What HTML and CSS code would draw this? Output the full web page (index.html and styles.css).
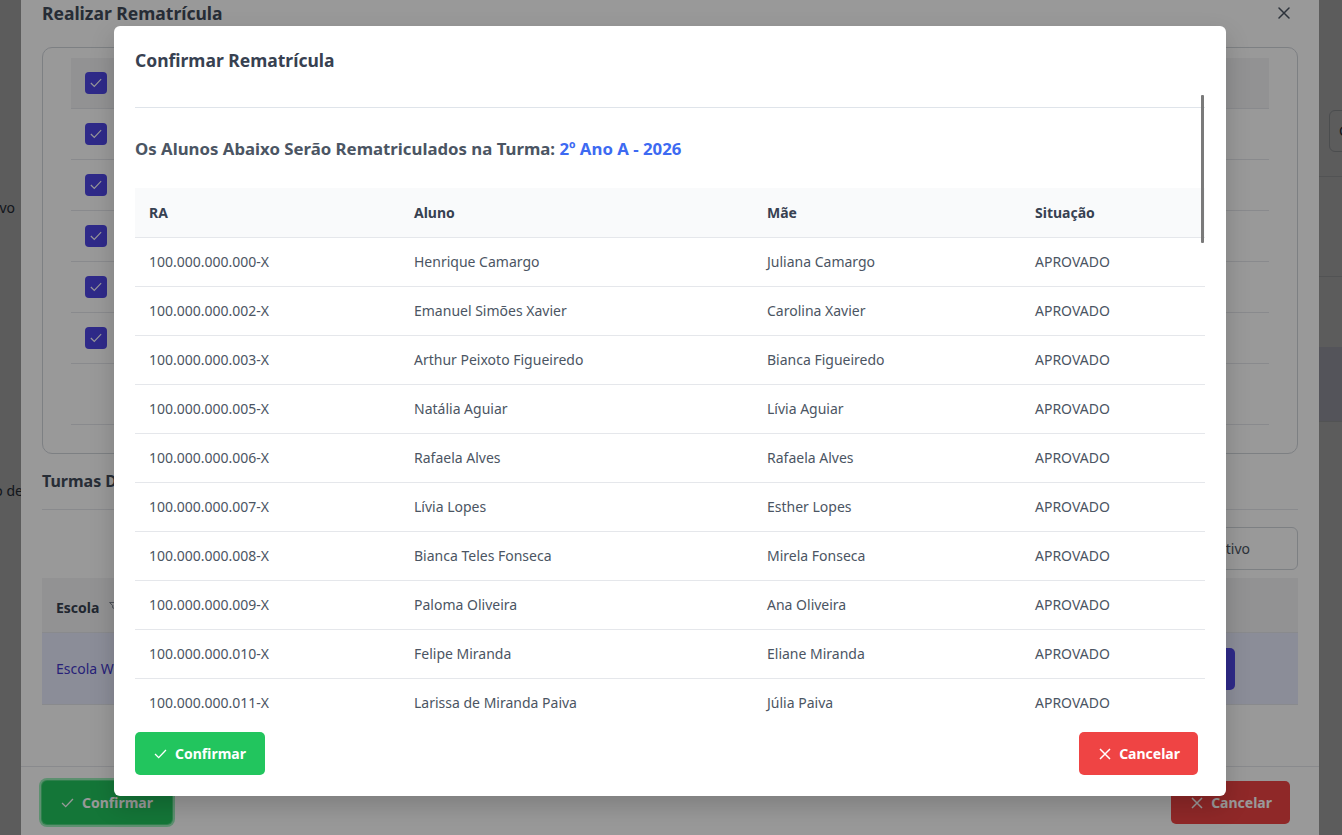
FILE: index.html
```html
<!DOCTYPE html>
<html lang="pt-BR">
<head>
<meta charset="utf-8">
<title>Confirmar Rematrícula</title>
<link rel="stylesheet" href="styles.css">
</head>
<body>
<div class="page">
  <div class="page-left">
    <div class="page-label page-label-1"><span>Ano Letivo</span></div>
    <div class="page-label page-label-2"><span>Período de</span></div>
  </div>
  <div class="page-right">
    <div class="page-btn">Consultar</div>
    <div class="page-row r1"></div>
    <div class="page-row r2"></div>
    <div class="page-row r3"></div>
  </div>
</div>

<div class="backdrop"></div>

<div class="modal modal-main">
  <div class="mm-header">
    <h2 class="mm-title">Realizar Rematrícula</h2>
    <svg class="mm-close" viewBox="0 0 12 12" width="12" height="12"><path d="M1 1L11 11M11 1L1 11" fill="none" stroke="currentColor" stroke-width="1.5" stroke-linecap="round"/></svg>
  </div>
  <div class="mm-card">
    <table class="mm-students">
      <thead>
        <tr><th class="chk-col"><span class="chk"><svg viewBox="0 0 14 11" width="12" height="10"><path d="M1 5.5L5 9.5L13 1" fill="none" stroke="currentColor" stroke-width="1.3"/></svg></span></th><th></th></tr>
      </thead>
      <tbody>
        <tr><td class="chk-col"><span class="chk"><svg viewBox="0 0 14 11" width="12" height="10"><path d="M1 5.5L5 9.5L13 1" fill="none" stroke="currentColor" stroke-width="1.3"/></svg></span></td><td></td></tr>
        <tr><td class="chk-col"><span class="chk"><svg viewBox="0 0 14 11" width="12" height="10"><path d="M1 5.5L5 9.5L13 1" fill="none" stroke="currentColor" stroke-width="1.3"/></svg></span></td><td></td></tr>
        <tr><td class="chk-col"><span class="chk"><svg viewBox="0 0 14 11" width="12" height="10"><path d="M1 5.5L5 9.5L13 1" fill="none" stroke="currentColor" stroke-width="1.3"/></svg></span></td><td></td></tr>
        <tr><td class="chk-col"><span class="chk"><svg viewBox="0 0 14 11" width="12" height="10"><path d="M1 5.5L5 9.5L13 1" fill="none" stroke="currentColor" stroke-width="1.3"/></svg></span></td><td></td></tr>
        <tr><td class="chk-col"><span class="chk"><svg viewBox="0 0 14 11" width="12" height="10"><path d="M1 5.5L5 9.5L13 1" fill="none" stroke="currentColor" stroke-width="1.3"/></svg></span></td><td></td></tr>
        <tr class="empty-row"><td class="chk-col"></td><td></td></tr>
      </tbody>
    </table>
  </div>

  <h3 class="mm-subtitle">Turmas Disponíveis</h3>
  <div class="mm-toolbar"><div class="mm-filter">Mostrar Inativo</div></div>

  <table class="mm-classes">
    <thead>
      <tr>
        <th class="col-escola">Escola <svg class="filter-ico" viewBox="0 0 10 8" width="9" height="7"><path d="M0.5 0.5H9.5L6 4V7.5L4 6.5V4Z" fill="none" stroke="currentColor" stroke-width="1"/></svg></th>
        <th>Turma</th>
        <th>Período</th>
        <th class="col-action"></th>
      </tr>
    </thead>
    <tbody>
      <tr class="selected">
        <td class="col-escola link">Escola Wilson Moreira</td>
        <td>2º Ano A</td>
        <td>Manhã</td>
        <td class="col-action"><span class="row-btn">Selecionar</span></td>
      </tr>
    </tbody>
  </table>

  <div class="mm-footer">
    <button class="btn btn-green btn-focus"><svg viewBox="0 0 14 11" width="13" height="10"><path d="M1 5.5L5 9.5L13 1" fill="none" stroke="currentColor" stroke-width="1.5"/></svg>Confirmar</button>
    <button class="btn btn-red"><svg viewBox="0 0 12 12" width="12" height="12"><path d="M1 1L11 11M11 1L1 11" fill="none" stroke="currentColor" stroke-width="1.5"/></svg>Cancelar</button>
  </div>
</div>

<div class="backdrop"></div>

<div class="modal modal-confirm">
  <div class="mc-header">
    <h2 class="mc-title">Confirmar Rematrícula</h2>
  </div>
  <div class="mc-body">
    <hr class="mc-sep">
    <h3 class="mc-heading">Os Alunos Abaixo Serão Rematriculados na Turma: <span class="mc-turma">2º Ano A - 2026</span></h3>
    <table class="mc-table">
      <colgroup>
        <col class="c-ra"><col class="c-aluno"><col class="c-mae"><col class="c-sit">
      </colgroup>
      <thead>
        <tr><th>RA</th><th>Aluno</th><th>Mãe</th><th>Situação</th></tr>
      </thead>
      <tbody>
        <tr><td>100.000.000.000-X</td><td>Henrique Camargo</td><td>Juliana Camargo</td><td>APROVADO</td></tr>
        <tr><td>100.000.000.002-X</td><td>Emanuel Simões Xavier</td><td>Carolina Xavier</td><td>APROVADO</td></tr>
        <tr><td>100.000.000.003-X</td><td>Arthur Peixoto Figueiredo</td><td>Bianca Figueiredo</td><td>APROVADO</td></tr>
        <tr><td>100.000.000.005-X</td><td>Natália Aguiar</td><td>Lívia Aguiar</td><td>APROVADO</td></tr>
        <tr><td>100.000.000.006-X</td><td>Rafaela Alves</td><td>Rafaela Alves</td><td>APROVADO</td></tr>
        <tr><td>100.000.000.007-X</td><td>Lívia Lopes</td><td>Esther Lopes</td><td>APROVADO</td></tr>
        <tr><td>100.000.000.008-X</td><td>Bianca Teles Fonseca</td><td>Mirela Fonseca</td><td>APROVADO</td></tr>
        <tr><td>100.000.000.009-X</td><td>Paloma Oliveira</td><td>Ana Oliveira</td><td>APROVADO</td></tr>
        <tr><td>100.000.000.010-X</td><td>Felipe Miranda</td><td>Eliane Miranda</td><td>APROVADO</td></tr>
        <tr><td>100.000.000.011-X</td><td>Larissa de Miranda Paiva</td><td>Júlia Paiva</td><td>APROVADO</td></tr>
        <tr><td>100.000.000.012-X</td><td>Gabriel Souza</td><td>Renata Souza</td><td>APROVADO</td></tr>
      </tbody>
    </table>
  </div>
  <div class="mc-footer">
    <button class="btn btn-green"><svg viewBox="0 0 14 11" width="13" height="10"><path d="M1 5.5L5 9.5L13 1" fill="none" stroke="currentColor" stroke-width="1.5"/></svg>Confirmar</button>
    <button class="btn btn-red"><svg viewBox="0 0 12 12" width="12" height="12"><path d="M1 1L11 11M11 1L1 11" fill="none" stroke="currentColor" stroke-width="1.5"/></svg>Cancelar</button>
  </div>
  <div class="mc-scroll-thumb"></div>
</div>
</body>
</html>
```

FILE: styles.css
```css
* { box-sizing: border-box; }
html, body { margin: 0; padding: 0; }
body {
  width: 1342px;
  height: 835px;
  overflow: hidden;
  position: relative;
  background: #ffffff;
  font-family: "Noto Sans", "Open Sans", sans-serif;
  color: #374151;
}

/* ---------- background page ---------- */
.page {
  display: flex;
  justify-content: space-between;
  height: 835px;
}
.page-left { width: 21px; overflow: hidden; }
.page-label {
  display: flex;
  justify-content: flex-end;
  white-space: nowrap;
  font-size: 14px;
  line-height: 20px;
  color: #374151;
}
.page-label-1 { width: 15px; margin-top: 198px; }
.page-label-2 { width: 23px; margin-top: 263px; }

.page-right { width: 23px; overflow: hidden; padding-left: 10px; }
.page-btn {
  width: 110px;
  height: 42px;
  margin-top: 110px;
  border: 1px solid #d1d5db;
  border-radius: 6px;
  padding-left: 9px;
  font-size: 14px;
  line-height: 40px;
  color: #374151;
  white-space: nowrap;
}
.page-row { margin-left: -10px; width: 60px; border-bottom: 1px solid #e5e7eb; }
.page-row.r1 { height: 25px; }
.page-row.r2 { height: 100px; }
.page-row.r3 { height: 145px; background: linear-gradient(#fff 0 70px, #e9ecfa 70px); }

.backdrop {
  position: absolute;
  inset: 0;
  background: rgba(0, 0, 0, 0.4);
}

.modal {
  position: absolute;
  background: #ffffff;
}

/* ---------- main modal (behind) ---------- */
.modal-main {
  left: 21px;
  top: -12px;
  width: 1298px;
  height: 880px;
  border-radius: 8px;
}
.mm-header {
  display: flex;
  justify-content: space-between;
  align-items: center;
  padding: 12px 29px 0 21px;
}
.mm-title {
  margin: 0;
  font-size: 17.5px;
  line-height: 26px;
  font-weight: 700;
  color: #414b5a;
}
.mm-close { color: #4b5563; }

.mm-card {
  margin: 21px 21px 0;
  border: 1px solid #d1d5db;
  border-radius: 10px;
  padding: 10px 28px 28px;
}
.mm-students {
  width: 100%;
  border-collapse: separate;
  border-spacing: 0;
}
.mm-students th, .mm-students td {
  height: 51px;
  padding: 0 14px;
  border-bottom: 1px solid #e5e7eb;
  text-align: left;
  vertical-align: middle;
}
.mm-students thead th { background: #f3f4f6; }
.mm-students .chk-col { width: 60px; }
.mm-students .empty-row td { height: 61px; }
.chk {
  display: flex;
  align-items: center;
  justify-content: center;
  width: 22px;
  height: 22px;
  border-radius: 4px;
  background: #4f46e5;
  color: #ffffff;
}

.mm-subtitle {
  margin: 15px 21px 0;
  font-size: 16px;
  line-height: 24px;
  font-weight: 700;
  color: #414b5a;
  padding-bottom: 16px;
  border-bottom: 1px solid #e5e7eb;
}
.mm-toolbar {
  display: flex;
  justify-content: flex-end;
  margin: 17px 21px 0;
}
.mm-filter {
  height: 43px;
  border: 1px solid #d1d5db;
  border-radius: 6px;
  padding: 0 47px 0 16px;
  font-size: 14px;
  line-height: 41px;
  color: #4b5563;
}
.mm-classes {
  width: calc(100% - 42px);
  margin: 8px 21px 0;
  border-collapse: separate;
  border-spacing: 0;
}
.mm-classes th, .mm-classes td {
  padding: 0 14px;
  text-align: left;
  font-size: 14px;
  border-bottom: 1px solid #e5e7eb;
}
.mm-classes th {
  height: 55px;
  padding-top: 4px;
  background: #f3f4f6;
  font-weight: 700;
  color: #374151;
}
.mm-classes td { height: 72px; color: #4b5563; }
.mm-classes tr.selected td { background: #e8ecfd; }
.mm-classes .link { color: #4338ca; }
.filter-ico { color: #6b7280; vertical-align: 4px; margin-left: 6px; }
.mm-classes .col-action { text-align: right; padding-right: 63px; width: 200px; }
.row-btn {
  display: inline-block;
  height: 42px;
  line-height: 42px;
  padding: 0 18px;
  border-radius: 5px;
  background: #4f46e5;
  color: #ffffff;
  font-weight: 600;
}

.mm-footer {
  display: flex;
  justify-content: space-between;
  margin-top: 61px;
  border-top: 1px solid #e5e7eb;
  padding: 14px 29px 0 21px;
}

/* ---------- buttons ---------- */
.btn {
  display: inline-flex;
  align-items: center;
  gap: 8px;
  height: 43px;
  padding: 0 18px 0 19px;
  border: 0;
  border-radius: 5px;
  font-family: inherit;
  font-size: 14px;
  font-weight: 700;
  color: #ffffff;
}
.btn-green { background: #22c55e; padding-right: 19px; }
.btn-red { background: #ef4444; padding-left: 20px; }
.btn-focus { box-shadow: 0 0 0 1px #4fd67f, 0 0 0 3px #9cf0bb; }

/* ---------- confirm modal (front) ---------- */
.modal-confirm {
  left: 114px;
  top: 26px;
  width: 1112px;
  height: 770px;
  border-radius: 6px;
  display: flex;
  flex-direction: column;
  box-shadow: 0 10px 25px rgba(0, 0, 0, 0.18);
}
.mc-header { padding: 21px 21px 22px; }
.mc-title {
  margin: 0;
  font-size: 17.5px;
  line-height: 26px;
  font-weight: 700;
  color: #374151;
}
.mc-body {
  flex: 1;
  min-height: 0;
  overflow: hidden;
  margin: 0 21px;
}
.mc-sep {
  margin: 12px 0 0;
  border: 0;
  border-top: 1px solid #dfe4ea;
}
.mc-heading {
  margin: 29px 0 0;
  font-size: 16.8px;
  line-height: 24px;
  font-weight: 700;
  color: #4b5563;
}
.mc-turma { color: #3d6af2; }

.mc-table {
  width: 100%;
  margin-top: 27px;
  border-collapse: collapse;
  table-layout: fixed;
}
.c-ra { width: 265px; }
.c-aluno { width: 353px; }
.c-mae { width: 268px; }
.c-sit { width: 184px; }
.mc-table th, .mc-table td {
  padding: 0 14px;
  text-align: left;
  font-size: 14px;
  border-bottom: 1px solid #e5e7eb;
  white-space: nowrap;
}
.mc-table th {
  height: 49px;
  background: #f9fafb;
  font-weight: 700;
  color: #374151;
}
.mc-table td {
  height: 49px;
  color: #4b5563;
}

.mc-footer {
  display: flex;
  justify-content: space-between;
  padding: 12px 28px 21px 21px;
}

.mc-scroll-thumb {
  position: absolute;
  left: 1087px;
  top: 69px;
  width: 3px;
  height: 148px;
  border-radius: 1px;
  background: #7a7a7a;
}
```
